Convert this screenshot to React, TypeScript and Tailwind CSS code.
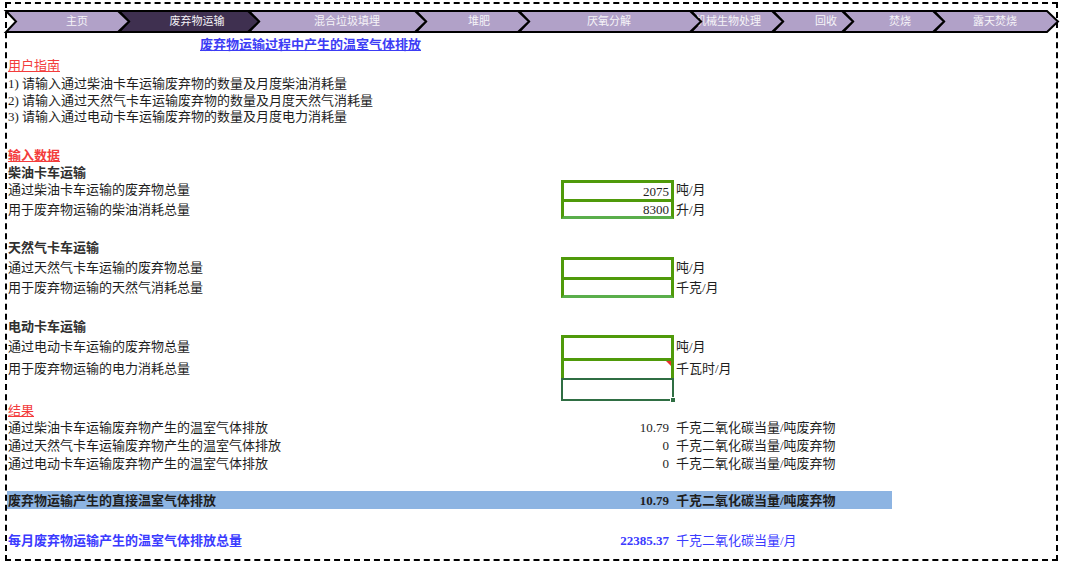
const tabs = [
  { label: "主页", w: 113, c: 72 },
  { label: "废弃物运输", w: 130, c: 79, active: true },
  { label: "混合垃圾填埋", w: 167, c: 99 },
  { label: "堆肥", w: 103, c: 64 },
  { label: "厌氧分解", w: 172, c: 91 },
  { label: "机械生物处理", w: 82, c: 38 },
  { label: "回收", w: 70, c: 54 },
  { label: "焚烧", w: 91, c: 58 },
  { label: "露天焚烧", w: 114, c: 62 },
];

function NavBar() {
  return (
    <div className="flex h-[23px] ml-[-2px] mt-[6px]">
      {tabs.map((t, i) => (
        <div key={t.label} className="relative h-[23px] shrink-0" style={{ width: t.w, zIndex: 20 - i }}>
          <svg className="absolute left-0 top-0 overflow-visible" width={t.w + 12} height={23}>
            <polygon
              points={`1,1 ${t.w},1 ${t.w + 11},11.5 ${t.w},22 1,22 11,11.5`}
              fill={t.active ? "#3f3050" : "#b1a1c8"}
              stroke="#000"
              strokeWidth={2}
            />
          </svg>
          <span
            className="absolute top-0 h-full flex items-center -translate-x-1/2 whitespace-nowrap text-[11px] text-[#f6f4f8]"
            style={{ left: t.c }}
          >
            {t.label}
          </span>
        </div>
      ))}
    </div>
  );
}

const topCell = "h-full w-[113px] border-x-[3px] border-t-[3px] border-[#4f9a0a]";
const lastCell = "h-full w-[113px] border-[3px] border-[#4f9a0a] border-b-[#5aae4b]";

function InputRow({
  h,
  label,
  cellCls,
  value,
  unit,
  children,
}: {
  h: string;
  label: string;
  cellCls: string;
  value?: string;
  unit?: string;
  children?: React.ReactNode;
}) {
  return (
    <div className={`flex items-center ${h}`}>
      <div className="w-[554px] pl-px">{label}</div>
      <div className={`relative flex items-center justify-end pr-[2px] ${cellCls}`}>
        {value}
        {children}
      </div>
      <div className="pl-[2px]">{unit}</div>
    </div>
  );
}

function ResultRow({ h, label, value }: { h: string; label: string; value: string }) {
  return (
    <div className={`flex items-center ${h}`}>
      <div className="w-[554px] pl-px">{label}</div>
      <div className="w-[113px] text-right pr-[5px]">{value}</div>
      <div className="pl-[2px]">千克二氧化碳当量/吨废弃物</div>
    </div>
  );
}

export default function App() {
  return (
    <div
      className="w-[1066px] h-[566px] bg-white overflow-hidden text-[13px] text-[#1e1e1e] leading-none"
      style={{ fontFamily: '"Liberation Serif", "Noto Sans CJK SC", serif' }}
    >
      <div className="ml-[5px] mt-[2px] w-[1053px] h-[559px] border-2 border-dashed border-black">
        <NavBar />

        <div className="flex items-center h-[23px]">
          <span className="ml-[193px] font-bold underline text-[#3c3cf5]">废弃物运输过程中产生的温室气体排放</span>
        </div>
        <div className="flex items-center h-[19px] pl-px">
          <span className="underline text-[#f33c3c]">用户指南</span>
        </div>
        <div className="flex items-center h-[17px] pl-px">1) 请输入通过柴油卡车运输废弃物的数量及月度柴油消耗量</div>
        <div className="flex items-center h-[16px] pl-px">2) 请输入通过天然气卡车运输废弃物的数量及月度天然气消耗量</div>
        <div className="flex items-center h-[16px] pl-px">3) 请输入通过电动卡车运输废弃物的数量及月度电力消耗量</div>
        <div className="h-[22px]" />

        <div className="flex items-center h-[18px] pl-px">
          <span className="underline text-[#f33c3c] font-bold">输入数据</span>
        </div>
        <div className="flex items-center h-[16px] pl-px font-bold text-[#303030]">柴油卡车运输</div>
        <InputRow h="h-[19px]" label="通过柴油卡车运输的废弃物总量" cellCls={topCell} value="2075" unit="吨/月" />
        <InputRow h="h-[20px]" label="用于废弃物运输的柴油消耗总量" cellCls={lastCell} value="8300" unit="升/月" />
        <div className="h-[19px]" />

        <div className="flex items-center h-[19px] pl-px font-bold text-[#303030]">天然气卡车运输</div>
        <InputRow h="h-[20px]" label="通过天然气卡车运输的废弃物总量" cellCls={topCell} unit="吨/月" />
        <InputRow h="h-[21px]" label="用于废弃物运输的天然气消耗总量" cellCls={lastCell} unit="千克/月" />
        <div className="h-[19px]" />

        <div className="flex items-center h-[18px] pl-px font-bold text-[#303030]">电动卡车运输</div>
        <InputRow h="h-[23px]" label="通过电动卡车运输的废弃物总量" cellCls={topCell} unit="吨/月" />
        <InputRow h="h-[20px]" label="用于废弃物运输的电力消耗总量" cellCls="h-full w-[113px] border-x-[3px] border-t-[3px] border-[#4f9a0a]" unit="千瓦时/月">
          <span className="absolute right-0 top-0 w-0 h-0 border-l-[5px] border-l-transparent border-t-[5px] border-t-[#e8322f]" />
        </InputRow>
        <div className="flex items-center h-[23px]">
          <div className="w-[554px]" />
          <div className="relative h-full w-[113px] border-2 border-[#2f6e43]">
            <span className="absolute -right-[4px] -bottom-[4px] w-[6px] h-[6px] bg-[#2f6e43] border border-white" />
          </div>
        </div>

        <div className="flex items-center h-[18px] pl-px">
          <span className="underline text-[#f33c3c]">结果</span>
        </div>
        <ResultRow h="h-[17px]" label="通过柴油卡车运输废弃物产生的温室气体排放" value="10.79" />
        <ResultRow h="h-[18px]" label="通过天然气卡车运输废弃物产生的温室气体排放" value="0" />
        <ResultRow h="h-[18px]" label="通过电动卡车运输废弃物产生的温室气体排放" value="0" />
        <div className="h-[19px]" />

        <div className="flex items-center h-[18px] w-[885px] bg-[#8db4e2] font-bold">
          <div className="w-[554px] pl-px">废弃物运输产生的直接温室气体排放</div>
          <div className="w-[113px] text-right pr-[5px]">10.79</div>
          <div className="pl-[2px]">千克二氧化碳当量/吨废弃物</div>
        </div>
        <div className="h-[22px]" />

        <div className="flex items-center h-[18px] text-[#3b3bff]">
          <div className="w-[554px] pl-px font-bold">每月废弃物运输产生的温室气体排放总量</div>
          <div className="w-[113px] text-right pr-[5px] font-bold">22385.37</div>
          <div className="pl-[2px]">千克二氧化碳当量/月</div>
        </div>
      </div>
    </div>
  );
}
